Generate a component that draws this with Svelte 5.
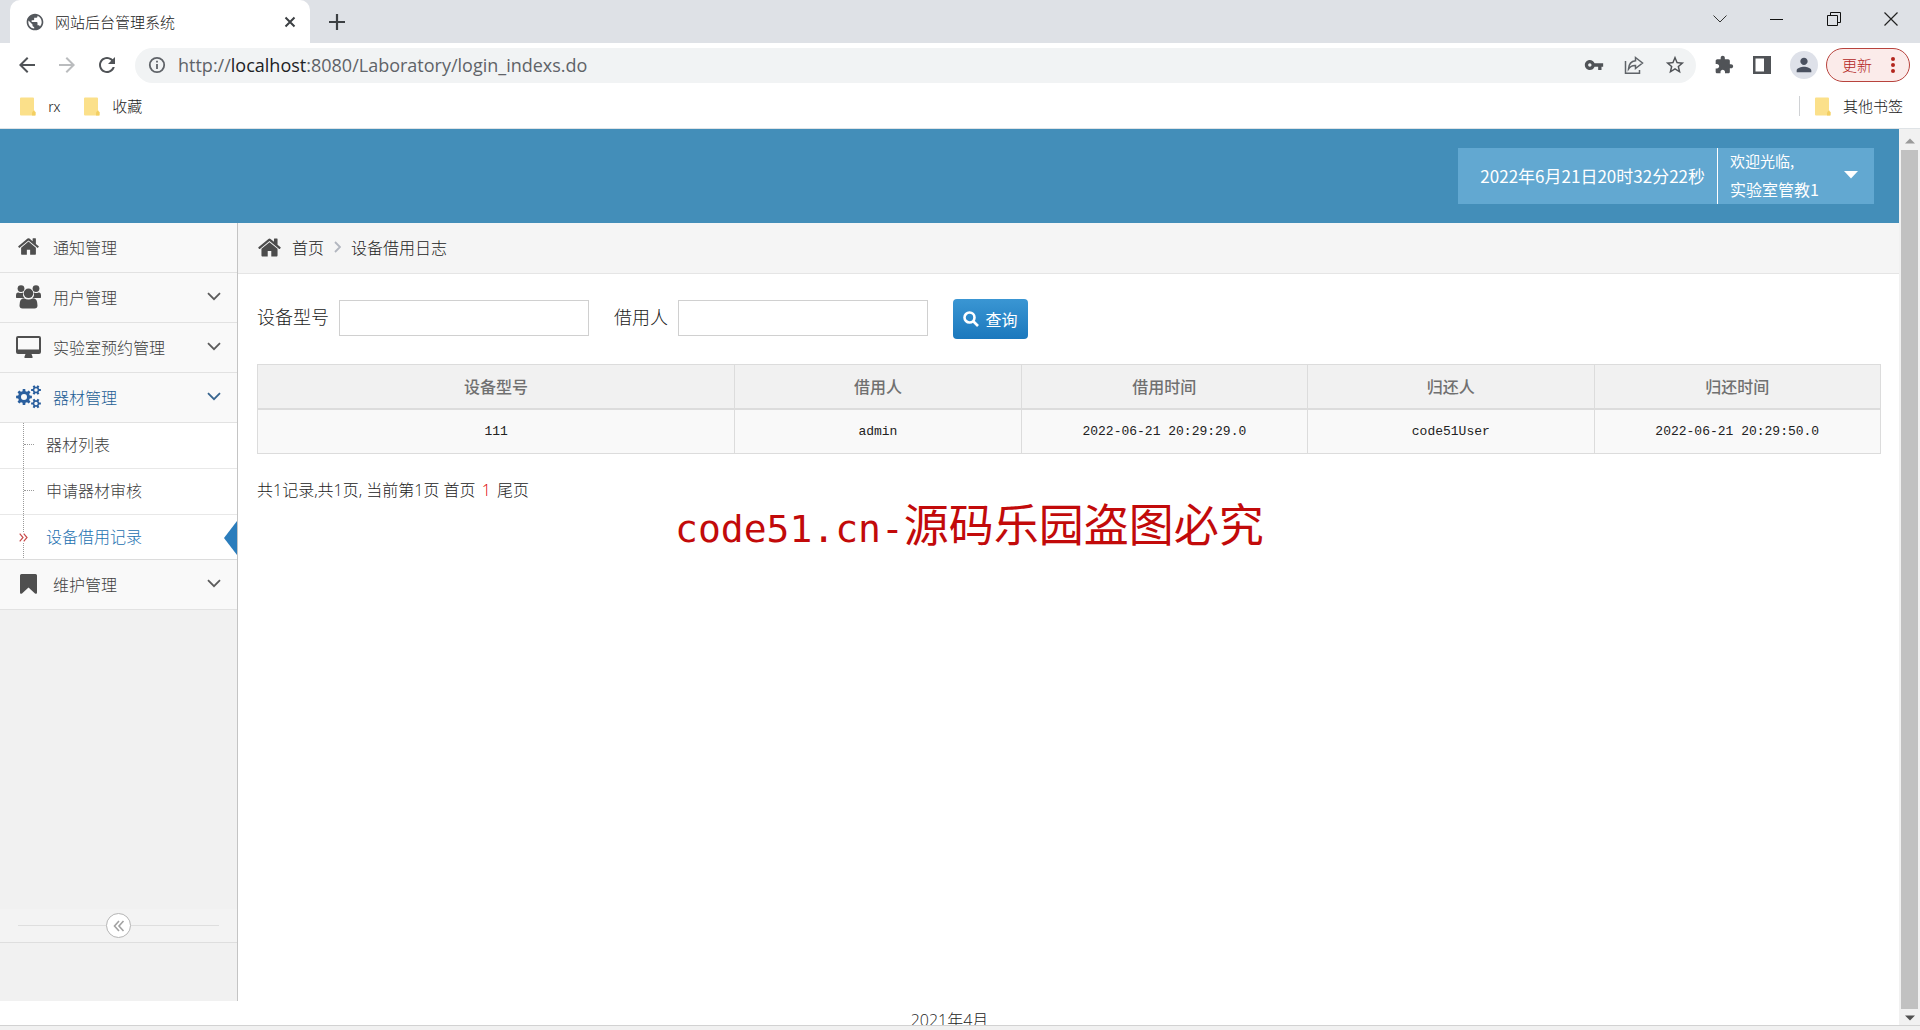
<script>
  const homePath =
    'M1472 992v480q0 26-19 45t-45 19h-384v-384h-256v384h-384q-26 0-45-19t-19-45v-480q0-1 .5-3t.5-3l575-474 575 474q1 2 1 6zm223-69l-62 74q-8 9-21 11h-3q-13 0-21-7l-692-577-692 577q-12 8-24 7-13-2-21-11l-62-74q-8-10-7-23.5t11-21.5l719-599q32-26 76-26t76 26l244 204v-195q0-14 9-23t23-9h192q14 0 23 9t9 23v408l219 182q10 8 11 21.5t-7 23.5z';

  // Closed outline of a cog wheel with a round hole.
  function gear(cx, cy, outer, inner, hole, teeth) {
    const points = [];
    const step = (Math.PI * 2) / teeth;
    for (let i = 0; i < teeth; i++) {
      const a = i * step;
      for (const [offset, r] of [[-0.32, inner], [-0.2, outer], [0.2, outer], [0.32, inner]]) {
        const t = a + offset * step;
        points.push(`${(cx + r * Math.cos(t)).toFixed(2)} ${(cy + r * Math.sin(t)).toFixed(2)}`);
      }
    }
    return `M${points.join('L')}ZM${cx - hole} ${cy}a${hole} ${hole} 0 1 0 ${hole * 2} 0a${hole} ${hole} 0 1 0 ${-hole * 2} 0Z`;
  }

  const cogs = gear(8, 12, 8, 6, 3, 8) + gear(20, 5, 5, 3.4, 1.7, 6) + gear(20, 18.5, 5, 3.4, 1.7, 6);

  const nav = [
    { icon: 'home', label: '通知管理' },
    { icon: 'users', label: '用户管理', group: true },
    { icon: 'desktop', label: '实验室预约管理', group: true },
    {
      icon: 'cogs',
      label: '器材管理',
      group: true,
      open: true,
      children: [
        { label: '器材列表' },
        { label: '申请器材审核' },
        { label: '设备借用记录', active: true }
      ]
    },
    { icon: 'bookmark', label: '维护管理', group: true }
  ];

  const columns = ['设备型号', '借用人', '借用时间', '归还人', '归还时间'];
  const rows = [['111', 'admin', '2022-06-21 20:29:29.0', 'code51User', '2022-06-21 20:29:50.0']];

  let model = $state('');
  let borrower = $state('');
</script>

{#snippet folder()}
  <svg class="folder" width="17" height="19" viewBox="0 0 17 19" aria-hidden="true">
    <path d="M1 1.5Q1 .5 2 .5H14Q15 .5 15 1.5V13L16.500 15V17.500Q16.500 18.500 15.500 18.500H2Q1 18.500 1 17.500Z" fill="#fbe08a" />
    <path d="M13 18.500V15.500L14.500 13.500L16.500 15.500V18.500Z" fill="#f3cf62" />
  </svg>
{/snippet}

<div class="window">
  <div class="tabs">
    <div class="tab">
      <svg width="20" height="20" viewBox="0 0 24 24" fill="#54585d" aria-hidden="true">
        <path d="M12 2C6.48 2 2 6.480 2 12s4.480 10 10 10 10-4.480 10-10S17.520 2 12 2zm-1 17.930c-3.950-.49-7-3.850-7-7.930 0-.62.080-1.210.210-1.790L9 15v1c0 1.100.9 2 2 2v1.930zm6.900-2.540c-.26-.81-1-1.390-1.900-1.390h-1v-3c0-.55-.45-1-1-1H8v-2h2c.55 0 1-.45 1-1V7h2c1.100 0 2-.9 2-2v-.41c2.930 1.190 5 4.060 5 7.410 0 2.080-.8 3.970-2.100 5.390z" />
      </svg>
      <span class="tab-title">网站后台管理系统</span>
      <button class="plain" aria-label="关闭标签页">
        <svg width="12" height="12" viewBox="0 0 12 12" stroke="#3c4043" stroke-width="2"><path d="M1.500 1.500L10.500 10.500M10.500 1.500L1.500 10.500" /></svg>
      </button>
    </div>
    <button class="plain new-tab" aria-label="新标签页">
      <svg width="16" height="16" viewBox="0 0 16 16" stroke="#3c4043" stroke-width="2.200"><path d="M8 0V16M0 8H16" /></svg>
    </button>
    <div class="controls">
      <button class="plain" aria-label="搜索标签页"><svg width="14" height="14" viewBox="0 0 14 14" fill="none" stroke="#333" stroke-width="1"><path d="M.5 3.500L7 10L13.500 3.500" /></svg></button>
      <button class="plain" aria-label="最小化"><svg width="14" height="14" viewBox="0 0 14 14" fill="none" stroke="#111"><path d="M0 7.500H13" /></svg></button>
      <button class="plain" aria-label="还原"><svg width="14" height="14" viewBox="0 0 14 14" fill="none" stroke="#111" stroke-width="1"><path d="M.5 3.500H10.500V13.500H.5ZM3.500 3.500V.5H13.500V10.500H10.500" /></svg></button>
      <button class="plain" aria-label="关闭"><svg width="14" height="14" viewBox="0 0 14 14" fill="none" stroke="#222" stroke-width="1.200"><path d="M.5 .5L13.500 13.500M13.500 .5L.5 13.500" /></svg></button>
    </div>
  </div>

  <div class="toolbar">
    <div class="history">
      <button class="plain" aria-label="后退"><svg width="24" height="24" viewBox="0 0 24 24" fill="#505357"><path d="M20 11H7.830l5.590-5.590L12 4l-8 8 8 8 1.410-1.410L7.830 13H20v-2z" /></svg></button>
      <button class="plain" aria-label="前进"><svg width="24" height="24" viewBox="0 0 24 24" fill="#babcbe"><path d="M4 11H16.170l-5.590-5.590L12 4l8 8-8 8-1.410-1.410L16.170 13H4v-2z" /></svg></button>
      <button class="plain" aria-label="重新加载"><svg width="24" height="24" viewBox="0 0 24 24" fill="#505357"><path d="M17.650 6.350C16.200 4.900 14.210 4 12 4c-4.420 0-7.990 3.580-7.990 8s3.570 8 7.990 8c3.730 0 6.840-2.550 7.730-6h-2.080c-.82 2.330-3.040 4-5.650 4-3.310 0-6-2.690-6-6s2.690-6 6-6c1.660 0 3.140.69 4.220 1.780L13 11h7V4l-2.350 2.350z" /></svg></button>
    </div>
    <div class="omnibox">
      <svg width="18" height="18" viewBox="0 0 18 18" fill="none" stroke="#5f6368" stroke-width="1.800" aria-hidden="true"><circle cx="9" cy="9" r="7.200" /><path d="M9 8V13M9 4.800V6.600" /></svg>
      <span class="url">http://<b>localhost</b>:8080/Laboratory/login_indexs.do</span>
      <div class="omni-actions">
        <button class="plain" aria-label="密码"><svg width="20" height="20" viewBox="0 0 24 24" fill="#505357"><path d="M12.650 10C11.830 7.670 9.610 6 7 6c-3.310 0-6 2.690-6 6s2.690 6 6 6c2.610 0 4.830-1.670 5.650-4H17v4h4v-4h2v-4H12.650zM7 14c-1.100 0-2-.9-2-2s.9-2 2-2 2 .9 2 2-.9 2-2 2z" /></svg></button>
        <button class="plain" aria-label="分享"><svg width="20" height="20" viewBox="0 0 20 20" fill="none" stroke="#5f6368" stroke-width="1.500"><path d="M1.500 6V18.200H15.500V15M11.500 2.500L18.500 8L11.500 13.500V10.500Q7 10.200 4.500 14Q5 6.500 11.500 5.800Z" /></svg></button>
        <button class="plain" aria-label="为此页添加书签"><svg width="22" height="22" viewBox="0 0 24 24" fill="#505357"><path d="M22 9.240l-7.190-.62L12 2 9.190 8.630 2 9.240l5.460 4.730L5.820 21 12 17.270 18.180 21l-1.630-7.030L22 9.240zM12 15.400l-3.760 2.270 1-4.280-3.320-2.880 4.380-.38L12 6.100l1.710 4.040 4.380.38-3.320 2.880 1 4.280L12 15.400z" /></svg></button>
      </div>
    </div>
    <div class="extras">
      <button class="plain" aria-label="扩展程序"><svg width="20" height="20" viewBox="0 0 24 24" fill="#505357"><path d="M20.500 11H19V7c0-1.100-.9-2-2-2h-4V3.500C13 2.120 11.880 1 10.500 1S8 2.120 8 3.500V5H4c-1.100 0-1.990.9-1.990 2v3.800H3.500c1.490 0 2.700 1.210 2.700 2.700s-1.210 2.700-2.700 2.700H2V20c0 1.100.9 2 2 2h3.800v-1.500c0-1.490 1.210-2.700 2.700-2.700 1.490 0 2.700 1.210 2.700 2.700V22H17c1.100 0 2-.9 2-2v-4h1.500c1.380 0 2.500-1.120 2.500-2.500S21.880 11 20.500 11z" /></svg></button>
      <button class="plain" aria-label="侧边栏"><svg width="18" height="18" viewBox="0 0 18 18"><path d="M0 0H18V18H0ZM2.500 2.500V15.500H11V2.500Z" fill="#505357" fill-rule="evenodd" /></svg></button>
      <button class="plain avatar" aria-label="个人资料"><svg width="22" height="22" viewBox="0 0 24 24" fill="#4a5160"><path d="M12 12c2.210 0 4-1.790 4-4s-1.790-4-4-4-4 1.790-4 4 1.790 4 4 4zm0 2c-2.670 0-8 1.340-8 4v2h16v-2c0-2.660-5.330-4-8-4z" /></svg></button>
    </div>
    <button class="update">
      更新
      <svg width="4" height="18" viewBox="0 0 4 18" fill="#b3261e" aria-hidden="true"><circle cx="2" cy="3" r="2" /><circle cx="2" cy="9" r="2" /><circle cx="2" cy="15" r="2" /></svg>
    </button>
  </div>

  <div class="bookmarks">
    <a href="#rx">{@render folder()}rx</a>
    <a href="#fav">{@render folder()}收藏</a>
    <a class="other" href="#other">{@render folder()}其他书签</a>
  </div>

  <div class="viewport">
    <div class="page">
      <header>
        <div class="user-box">
          <span class="clock">2022年6月21日20时32分22秒</span>
          <button class="user">
            <span class="greeting"><small>欢迎光临,</small><span>实验室管教1</span></span>
            <svg width="14" height="8" viewBox="0 0 14 8" fill="#fff" aria-hidden="true"><path d="M0 0H14L7 7.500Z" /></svg>
          </button>
        </div>
      </header>

      <div class="body">
        <aside>
          <nav>
            {#each nav as item}
              <a class="item" class:open={item.open} href="#menu">
                <span class="item-icon">
                  {#if item.icon === 'home'}
                    <svg width="23" height="23" viewBox="0 0 1792 1792"><path d={homePath} /></svg>
                  {:else if item.icon === 'users'}
                    <svg width="25" height="24" viewBox="0 0 25 24"><circle cx="5" cy="3.600" r="3.400" /><circle cx="20" cy="3.600" r="3.400" /><path d="M0 12.500V10Q0 7 2.500 7.500Q5 8.500 7 7.500Q6.500 11 8.500 13H2Q0 13 0 12.500ZM25 12.500V10Q25 7 22.500 7.500Q20 8.500 18 7.500Q18.500 11 16.500 13H23Q25 13 25 12.500Z" /><circle cx="12.500" cy="8.300" r="4.800" /><path d="M3.500 20.500Q3.500 13.200 8 13.200Q12.500 16 17 13.200Q21.500 13.200 21.500 20.500Q21.500 23.500 18.500 23.500H6.500Q3.500 23.500 3.500 20.500Z" /></svg>
                  {:else if item.icon === 'desktop'}
                    <svg width="25" height="22" viewBox="0 0 25 22"><path fill-rule="evenodd" d="M2 0H23Q25 0 25 2V16Q25 18 23 18H15.500L16.500 20.500V22H8.500V20.500L9.500 18H2Q0 18 0 16V2Q0 0 2 0ZM2 2V13.500H23V2Z" /></svg>
                  {:else if item.icon === 'cogs'}
                    <svg width="25" height="24" viewBox="0 0 25 24"><path fill-rule="evenodd" d={cogs} /></svg>
                  {:else}
                    <svg width="17" height="20" viewBox="0 0 17 20"><path d="M1.500 0H15.500Q17 0 17 1.500V18.500Q17 20.500 15 19.500L8.500 13.500L2 19.500Q0 20.500 0 18.500V1.500Q0 0 1.500 0Z" /></svg>
                  {/if}
                </span>
                <span class="item-label">{item.label}</span>
                {#if item.group}
                  <svg class="chev" width="14" height="9" viewBox="0 0 14 9"><path d="M1 1.200L7 7.200L13 1.200" /></svg>
                {/if}
              </a>
              {#if item.children}
                <ul>
                  {#each item.children as child}
                    <li class:active={child.active}>
                      <a href="#sub">{child.label}</a>
                      {#if child.active}
                        <svg class="marker" width="9" height="9" viewBox="0 0 9 9"><path d="M.7 .7L4 4.500L.7 8.300M4.700 .7L8 4.500L4.700 8.300" /></svg>
                        <svg class="pointer" width="13" height="34" viewBox="0 0 13 34"><path d="M13 0V34L0 17Z" /></svg>
                      {/if}
                    </li>
                  {/each}
                </ul>
              {/if}
            {/each}
          </nav>
          <div class="collapse">
            <button aria-label="收起菜单"><svg width="12" height="12" viewBox="0 0 12 12" fill="none" stroke="#a2a2a2" stroke-width="1.600"><path d="M6 1L1.500 6L6 11M10.500 1L6 6L10.500 11" /></svg></button>
          </div>
        </aside>

        <main>
          <div class="crumbs">
            <svg width="25" height="25" viewBox="0 0 1792 1792" fill="#4c4c4c" aria-hidden="true"><path d={homePath} /></svg>
            <a href="#home">首页</a>
            <svg width="7" height="12" viewBox="0 0 7 12" fill="none" stroke="#b2b6bf" stroke-width="1.800" aria-hidden="true"><path d="M1 1L6 6L1 11" /></svg>
            <span>设备借用日志</span>
          </div>

          <div class="content">
            <form onsubmit={(e) => e.preventDefault()}>
              <label for="model">设备型号</label>
              <input id="model" type="text" bind:value={model} />
              <label for="borrower">借用人</label>
              <input id="borrower" type="text" bind:value={borrower} />
              <button class="search" type="submit">
                <svg width="16" height="16" viewBox="0 0 16 16" fill="none" stroke="#fff" stroke-width="2.600" aria-hidden="true"><circle cx="6.500" cy="6.500" r="5" /><path d="M10 10L15 15" /></svg>
                查询
              </button>
            </form>

            <table>
              <colgroup><col class="wide" /><col /><col /><col /><col /></colgroup>
              <thead>
                <tr>{#each columns as c}<th scope="col">{c}</th>{/each}</tr>
              </thead>
              <tbody>
                {#each rows as row}
                  <tr>{#each row as cell}<td>{cell}</td>{/each}</tr>
                {/each}
              </tbody>
            </table>

            <p class="pager">共1记录,共1页, 当前第1页 <a href="#first">首页</a> <a class="current" href="#1">1</a> <a href="#last">尾页</a></p>
          </div>
          <div class="watermark"><span>code51.cn-</span>源码乐园盗图必究</div>
        </main>
      </div>

      <footer>2021年4月</footer>
    </div>

    <div class="scrollbar">
      <svg width="10" height="6" viewBox="0 0 10 6" fill="#9a9a9a"><path d="M0 5.500H10L5 .5Z" /></svg>
      <div class="thumb"></div>
      <svg width="10" height="6" viewBox="0 0 10 6" fill="#505050"><path d="M0 .5H10L5 5.500Z" /></svg>
    </div>
  </div>
  <div class="status"></div>
</div>

<style>
  :global(body) {
    margin: 0;
  }

  .window {
    display: flex;
    flex-direction: column;
    height: 100vh;
    overflow: hidden;
    background: #fff;
    color: #222;
    font-family: 'Noto Sans CJK SC', sans-serif;
    font-size: 16px;
    font-weight: 300;
    line-height: 24px;
  }

  .window :global(svg) {
    display: block;
    flex: none;
  }

  * {
    box-sizing: border-box;
  }

  a {
    color: inherit;
    text-decoration: none;
  }

  button {
    font: inherit;
    cursor: pointer;
  }

  .plain {
    display: flex;
    padding: 0;
    border: 0;
    background: none;
  }

  /* Browser frame */
  .tabs {
    display: flex;
    align-items: center;
    flex: none;
    height: 43px;
    padding-left: 10px;
    background: #dee1e6;
  }

  .tab {
    display: flex;
    align-items: center;
    gap: 10px;
    align-self: stretch;
    width: 300px;
    padding: 0 14px 0 15px;
    border-radius: 10px 10px 0 0;
    background: #fff;
  }

  .tab-title {
    flex: 1;
    font-size: 15px;
  }

  .new-tab {
    margin-left: 19px;
  }

  .controls {
    display: flex;
    gap: 43px;
    margin: -6px 22px 0 auto;
  }

  .toolbar {
    display: flex;
    align-items: center;
    flex: none;
    height: 45px;
    padding: 0 10px 1px 15px;
  }

  .history {
    display: flex;
    gap: 16px;
    width: 120px;
  }

  .omnibox {
    display: flex;
    align-items: center;
    flex: 1;
    height: 35px;
    padding: 0 10px 0 13px;
    border-radius: 18px;
    background: #f1f3f4;
  }

  .url {
    padding-left: 12px;
    color: #5f6368;
    font-family: 'Open Sans', sans-serif;
    font-size: 18px;
    font-weight: 400;
  }

  .url b {
    color: #202124;
    font-weight: 400;
  }

  .omni-actions {
    display: flex;
    align-items: center;
    gap: 20px;
    margin-left: auto;
  }

  .extras {
    display: flex;
    align-items: center;
    gap: 19px;
    padding: 0 8px 0 18px;
  }

  .avatar {
    align-items: center;
    justify-content: center;
    width: 28px;
    height: 28px;
    border-radius: 50%;
    background: #dee1e9;
  }

  .update {
    display: flex;
    align-items: center;
    justify-content: space-between;
    width: 84px;
    height: 34px;
    padding: 0 14px 0 15px;
    border: 1px solid #b8433d;
    border-radius: 17px;
    background: #fbebea;
    color: #b3261e;
    font-size: 15px;
  }

  .bookmarks {
    display: flex;
    align-items: center;
    flex: none;
    gap: 23px;
    height: 41px;
    padding: 0 17px 4px 19px;
    border-bottom: 1px solid #dfe3e6;
    font-size: 15px;
  }

  .bookmarks a {
    display: flex;
    align-items: center;
    gap: 12px;
  }

  .bookmarks .other {
    margin-left: auto;
    padding-left: 14px;
    border-left: 1px solid #d0d2d5;
    line-height: 20px;
  }

  .viewport {
    display: flex;
    flex: 1;
    min-height: 0;
  }

  .page {
    display: flex;
    flex-direction: column;
    flex: 1;
    min-width: 0;
  }

  .scrollbar {
    display: flex;
    flex-direction: column;
    align-items: center;
    width: 21px;
    padding: 9px 0 4px;
    gap: 6px;
    background: #f1f1f1;
  }

  .thumb {
    flex: 1;
    width: 17px;
    background: #c1c1c1;
  }

  .status {
    flex: none;
    height: 5px;
    border-top: 1px solid #d2d2d2;
    background: #f1f1f1;
  }

  /* Application */
  header {
    display: flex;
    align-items: center;
    justify-content: flex-end;
    flex: none;
    height: 94px;
    padding-right: 25px;
    background: #438eb9;
  }

  .user-box {
    display: flex;
    height: 56px;
    background: #62a8d1;
    color: #fff;
    font-weight: 400;
  }

  .clock {
    padding: 0 12px 0 22px;
    font-size: 17px;
    line-height: 56px;
  }

  .user {
    display: flex;
    align-items: center;
    justify-content: space-between;
    width: 157px;
    padding: 0 16px 2px 12px;
    border: 0;
    border-left: 1px solid #fff;
    background: none;
    color: #fff;
    text-align: left;
  }

  .greeting {
    display: flex;
    flex-direction: column;
    line-height: 28px;
  }

  .greeting small {
    font-size: 15px;
  }

  .body {
    display: flex;
    flex: 1;
    min-height: 0;
  }

  aside {
    display: flex;
    flex-direction: column;
    flex: none;
    width: 238px;
    padding-bottom: 58px;
    border-right: 1px solid #c4c4c4;
    background: #f1f1f1;
    color: #3f3f3f;
  }

  .item {
    display: flex;
    align-items: center;
    height: 50px;
    padding: 0 16px 2px 12px;
    border-bottom: 1px solid #e2e2e2;
    background: #f9f9f9;
  }

  .item-icon {
    display: flex;
    justify-content: center;
    width: 32px;
    margin-right: 9px;
    fill: #4f4f4f;
  }

  .item-label {
    flex: 1;
  }

  .chev {
    fill: none;
    stroke: #5c5c5c;
    stroke-width: 1.8;
  }

  .open {
    color: #1d5f95;
  }

  .open .item-icon {
    fill: #2a5f9e;
  }

  .open .chev {
    stroke: #38658f;
  }

  ul {
    position: relative;
    margin: 0;
    padding: 0;
    background: #fff;
    list-style: none;
  }

  ul::before {
    position: absolute;
    top: 0;
    bottom: 0;
    left: 23px;
    border-left: 1px dotted #9a9a9a;
    content: '';
  }

  li {
    position: relative;
    height: 46px;
    border-bottom: 1px solid #e8e8e8;
  }

  li:last-child {
    height: 45px;
    border-color: #dcdcdc;
  }

  li a {
    display: block;
    padding-left: 46px;
    line-height: 42px;
  }

  li::before {
    position: absolute;
    top: 21px;
    left: 24px;
    width: 10px;
    border-top: 1px dotted #9a9a9a;
    content: '';
  }

  li.active::before {
    display: none;
  }

  .active a {
    color: #1b6fb0;
  }

  .marker {
    position: absolute;
    top: 18px;
    left: 19px;
    background: #fff;
    fill: none;
    stroke: #c84a4a;
    stroke-width: 1.2;
  }

  .pointer {
    position: absolute;
    top: 6px;
    right: 0;
    fill: #2b7dbc;
  }

  .collapse {
    display: flex;
    align-items: center;
    justify-content: center;
    height: 34px;
    margin-top: auto;
    padding: 0 18px;
    border-bottom: 1px solid #dedede;
    background: #f3f3f3;
  }

  .collapse::before,
  .collapse::after {
    flex: 1;
    height: 1px;
    background: #dedede;
    content: '';
  }

  .collapse button {
    display: flex;
    align-items: center;
    justify-content: center;
    width: 25px;
    height: 25px;
    padding: 0;
    border: 1px solid #b5b5b5;
    border-radius: 50%;
    background: #fff;
  }

  main {
    position: relative;
    flex: 1;
    min-width: 0;
  }

  .crumbs {
    display: flex;
    align-items: center;
    gap: 10px;
    height: 51px;
    padding: 0 0 2px 19px;
    border-bottom: 1px solid #e5e5e5;
    background: #f5f5f5;
  }

  .content {
    padding: 25px 18px 0 19px;
  }

  form {
    display: flex;
    align-items: flex-start;
    font-size: 18px;
    line-height: 34px;
  }

  input {
    width: 250px;
    height: 36px;
    margin: 1px 25px 0 10px;
    padding: 0 6px;
    border: 1px solid #d0d0d0;
    background: #fff;
    font: inherit;
  }

  .search {
    display: flex;
    align-items: center;
    justify-content: center;
    gap: 6px;
    width: 75px;
    height: 40px;
    padding: 0;
    border: 0;
    border-radius: 4px;
    background: linear-gradient(#3a96d3, #1b78bd);
    color: #fff;
    font-size: 16px;
    font-weight: 400;
  }

  table {
    width: 100%;
    margin-top: 25px;
    border-collapse: collapse;
    table-layout: fixed;
    text-align: center;
  }

  .wide {
    width: 29.4%;
  }

  th,
  td {
    height: 44px;
    padding: 0;
    border: 1px solid #dcdcdc;
  }

  th {
    border-bottom-width: 2px;
    background: #f1f1f1;
    color: #707070;
    font-weight: 500;
  }

  td {
    height: 45px;
    padding-top: 2px;
    background: #f9f9f9;
    font-family: 'Liberation Mono', monospace;
    font-size: 13px;
    font-weight: 400;
  }

  .pager {
    margin: 24px 0 0;
    font-family: 'Open Sans', 'Noto Sans CJK SC', sans-serif;
    word-break: keep-all;
  }

  .current {
    margin: 0 2px;
    color: #d00;
  }

  .watermark {
    position: absolute;
    top: 270px;
    left: 437px;
    color: #c20a0a;
    font-size: 45px;
    font-weight: 400;
    line-height: 60px;
    white-space: nowrap;
  }

  .watermark span {
    font-family: 'DejaVu Sans Mono', monospace;
    font-size: 38px;
  }

  footer {
    flex: none;
    height: 24px;
    padding-top: 7px;
    overflow: hidden;
    font-family: 'Open Sans', 'Noto Sans CJK SC', sans-serif;
    text-align: center;
  }
</style>
